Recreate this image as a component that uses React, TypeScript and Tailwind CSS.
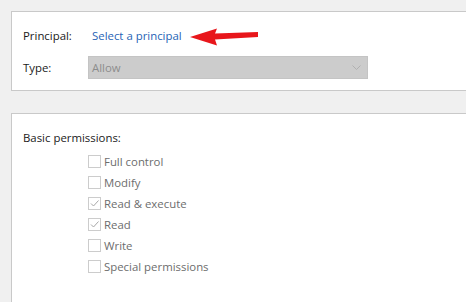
import React from "react";

const font = { fontFamily: '"Segoe UI", "Open Sans", "Noto Sans", sans-serif' };

const perms = [
  { label: "Full control", checked: false },
  { label: "Modify", checked: false },
  { label: "Read & execute", checked: true },
  { label: "Read", checked: true },
  { label: "Write", checked: false },
  { label: "Special permissions", checked: false },
];

const Checkbox = ({ checked }: { checked: boolean }) => (
  <div className="w-[13px] h-[13px] border border-[#cccccc] bg-white flex items-center justify-center">
    {checked && (
      <svg width="11" height="11" viewBox="0 0 11 11">
        <path d="M2 5.5 L4.5 8 L9.5 2.5" fill="none" stroke="#a8a8a8" strokeWidth="1" />
      </svg>
    )}
  </div>
);

export default function App() {
  return (
    <div
      className="w-[466px] h-[302px] bg-[#f0f0f0] overflow-hidden pt-[11px] pl-[11px] text-[11.4px]"
      style={font}
    >
      <div className="relative bg-white border border-[#c9c9c9] border-r-0 h-[80px] pl-[11px] pt-[14px]">
        <div className="flex items-center h-[20px]">
          <span className="w-[69px] text-[#1a1a1a]">Principal:</span>
          <span className="text-[#1f63b5]">Select a principal</span>
        </div>
        <div className="flex items-center mt-[10px]">
          <span className="w-[65px] text-[#1a1a1a]">Type:</span>
          <div className="w-[280px] h-[23px] bg-[#cccccc] border border-[#c4c4c4] flex items-center justify-between pl-[3px] pr-[6px]">
            <span className="text-[#8c8c8c]">Allow</span>
            <svg width="9" height="5" viewBox="0 0 9 5">
              <path d="M0.5 0.5 L4.5 4.5 L8.5 0.5" fill="none" stroke="#b0b0b0" strokeWidth="1" />
            </svg>
          </div>
        </div>
        <svg
          className="absolute left-[177px] top-[15px]"
          width="72"
          height="20"
          viewBox="0 0 72 20"
        >
          <path
            d="M1 10 L28 1.5 L26 6.5 L69 5 L69 10 L26 12.5 L28 18.5 Z"
            fill="#e8161b"
          />
        </svg>
      </div>
      <div className="mt-[22px] bg-white border border-[#c9c9c9] border-r-0 border-b-0 h-[200px] pl-[11px] pt-[14px]">
        <div className="text-[#1a1a1a] h-[20px] flex items-center">Basic permissions:</div>
        <div className="flex flex-col pl-[65px] mt-[3px]">
          {perms.map((p) => (
            <div key={p.label} className="flex items-center h-[21px] gap-[3px]">
              <Checkbox checked={p.checked} />
              <span className="text-[#6d6d6d]">{p.label}</span>
            </div>
          ))}
        </div>
      </div>
    </div>
  );
}
